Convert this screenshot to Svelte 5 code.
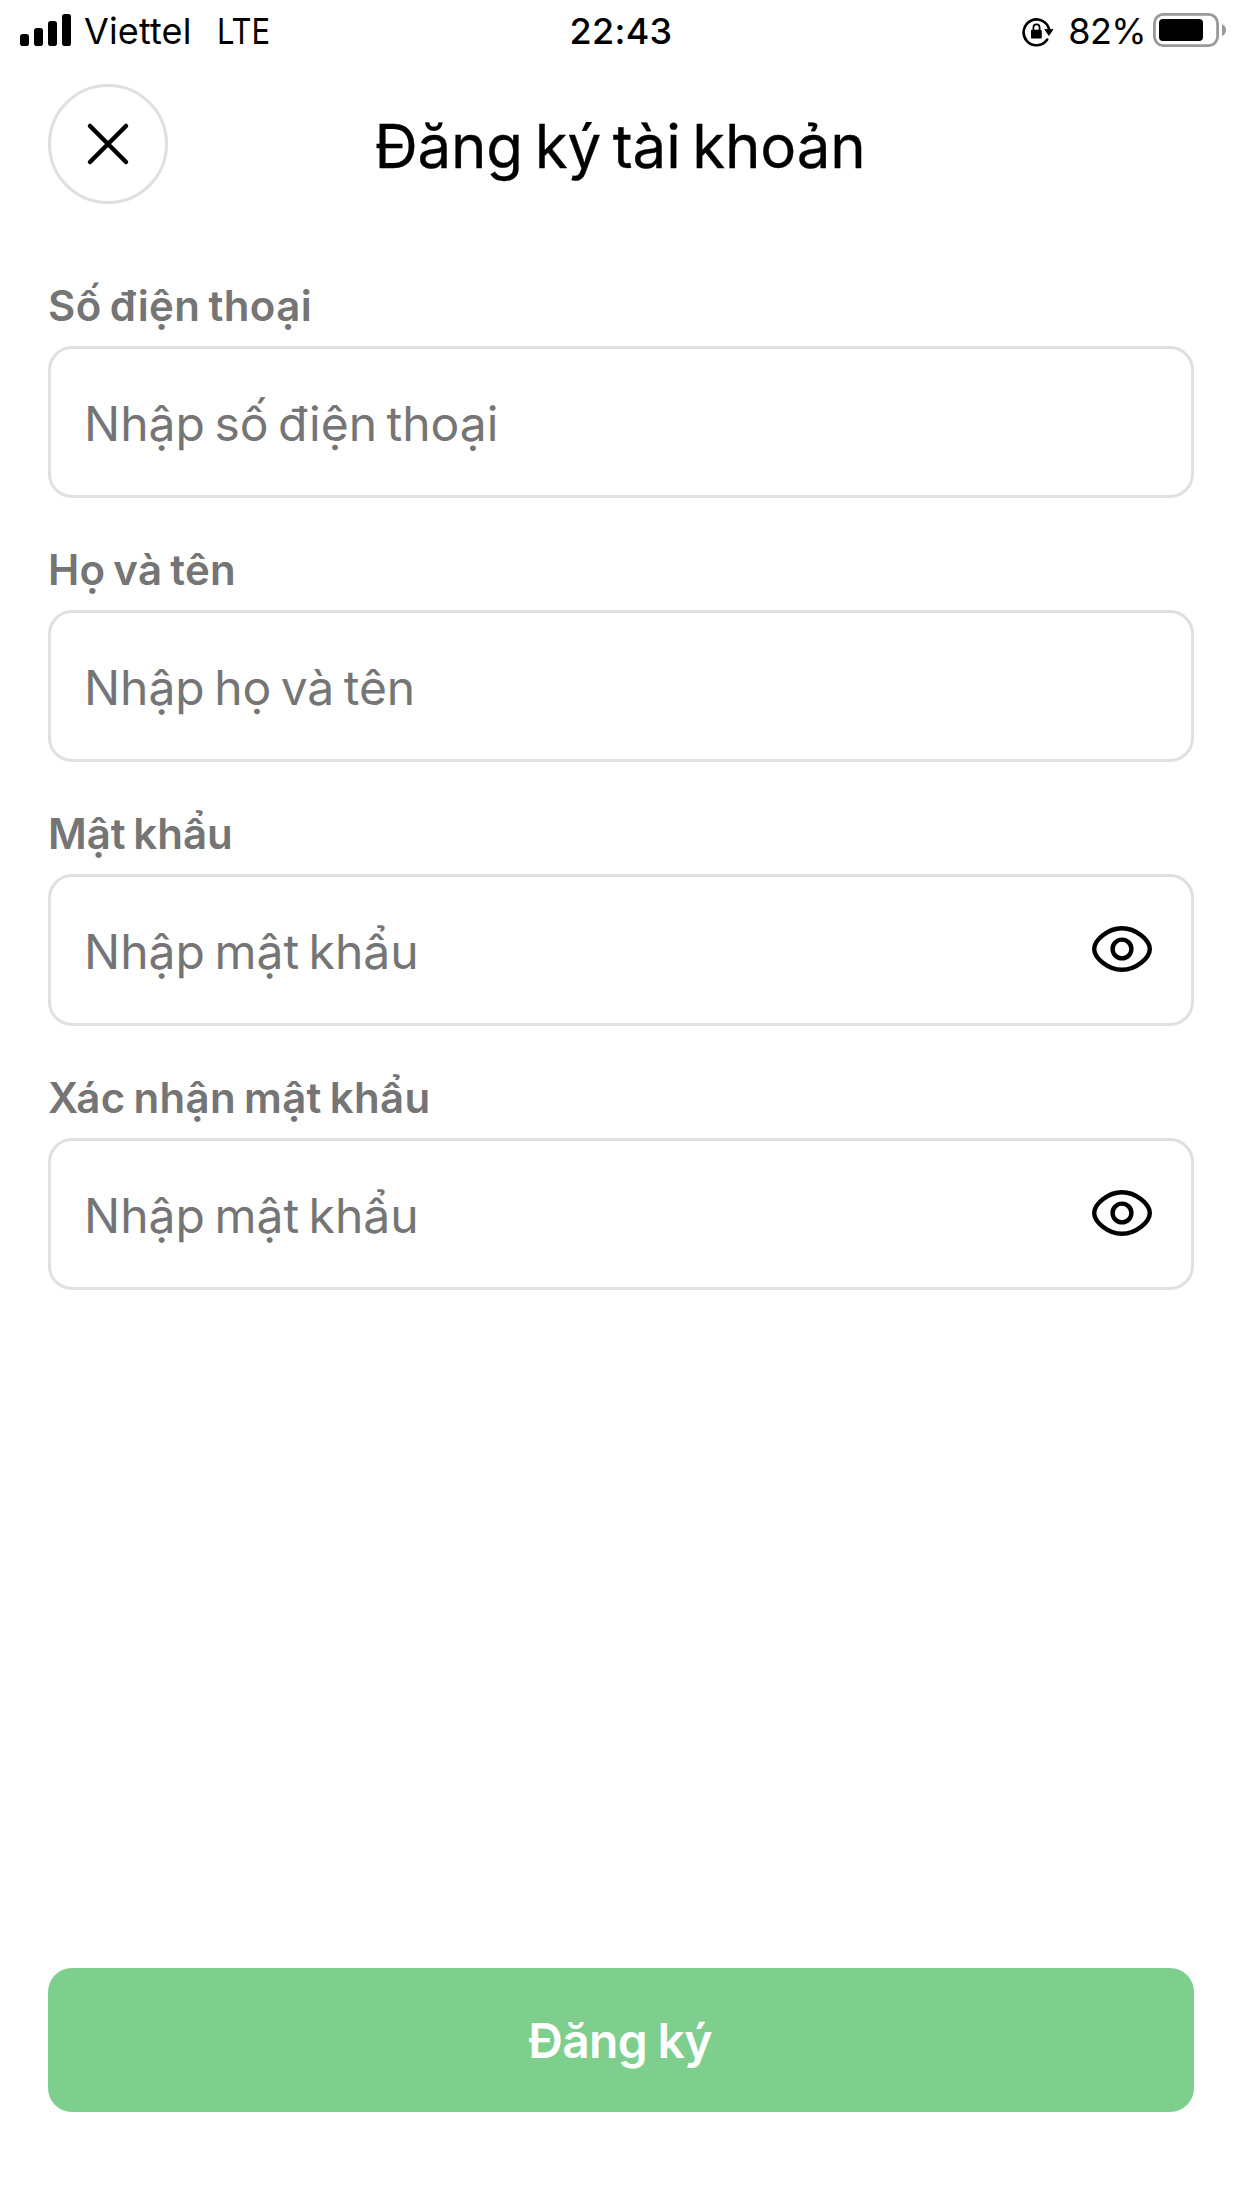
<script>
  const fields = [
    { id: 'phone', label: 'Số điện thoại', hint: 'Nhập số điện thoại', secret: false },
    { id: 'name', label: 'Họ và tên', hint: 'Nhập họ và tên', secret: false },
    { id: 'password', label: 'Mật khẩu', hint: 'Nhập mật khẩu', secret: true },
    { id: 'confirm', label: 'Xác nhận mật khẩu', hint: 'Nhập mật khẩu', secret: true }
  ];
</script>

<div class="screen">
  <div class="status">
    <div class="carrier">
      <svg class="signal" width="51" height="32" viewBox="0 0 51 32">
        <rect x="0" y="20" width="9" height="12" rx="2.8" />
        <rect x="14" y="14" width="9" height="18" rx="2.8" />
        <rect x="28" y="7" width="9" height="25" rx="2.8" />
        <rect x="42" y="0" width="9" height="32" rx="2.8" />
      </svg>
      <span class="operator">Viettel</span>
      <span class="network">LTE</span>
    </div>
    <div class="time">22:43</div>
    <div class="power">
      <svg class="lock" width="32" height="30" viewBox="0 0 32 30">
        <path d="M25.2 22.6A12.9 12.9 0 1 1 27.2 13" fill="none" stroke="#000" stroke-width="2.6" stroke-linecap="round" />
        <path d="M22.8 12.4h8.2l-4.1 6z" stroke="#000" stroke-width="0.8" stroke-linejoin="round" />
        <rect x="9" y="12.8" width="10.8" height="8.8" rx="1.2" />
        <path d="M11.4 13.5v-3a3.1 3.1 0 0 1 6.2 0v3" fill="none" stroke="#000" stroke-width="1.7" />
      </svg>
      <span class="percent">82%</span>
      <svg class="battery" width="74" height="34" viewBox="0 0 74 34">
        <rect x="1.4" y="1.4" width="63.2" height="31.2" rx="9" fill="none" stroke="#999" stroke-width="2.8" />
        <rect x="6" y="6" width="44" height="22" rx="4" />
        <path d="M69 11q4 2 4 6t-4 6z" fill="#999" />
      </svg>
    </div>
  </div>

  <header>
    <button class="close" aria-label="Đóng">
      <svg width="48" height="48" viewBox="0 0 48 48">
        <path d="M6 6l36 36M42 6L6 42" fill="none" stroke="#000" stroke-width="4.5" stroke-linecap="round" />
      </svg>
    </button>
    <h1>Đăng ký tài khoản</h1>
  </header>

  <main>
    {#each fields as field (field.id)}
      <section class="field {field.id}">
        <div class="label">{field.label}</div>
        <div class="box">
          <span class="hint">{field.hint}</span>
          {#if field.secret}
            <svg class="eye" width="60" height="48" viewBox="0 0 60 48">
              <path
                d="M30 3.2C44 3.2 57.8 15 57.8 24S44 44.8 30 44.8 2.2 33 2.2 24 16 3.2 30 3.2Z"
                fill="none" stroke="#000" stroke-width="4.4"
              />
              <circle cx="30" cy="24" r="9.4" fill="none" stroke="#000" stroke-width="4.4" />
            </svg>
          {/if}
        </div>
      </section>
    {/each}
  </main>

  <button class="submit">Đăng ký</button>
</div>

<style>
  :global(body) {
    background: #fff;
  }
  .screen {
    box-sizing: border-box;
    width: 1242px;
    height: 2208px;
    padding-bottom: 96px;
    display: flex;
    flex-direction: column;
    background: #fff;
    color: #000;
    font-family: Inter, Roboto, sans-serif;
  }
  .status {
    height: 62px;
    padding: 0 15px;
    display: grid;
    grid-template-columns: 1fr auto 1fr;
    font-size: 36px;
    line-height: 62px;
  }
  .carrier,
  .power {
    display: flex;
    align-items: flex-start;
  }
  .power {
    justify-content: flex-end;
  }
  .signal {
    margin: 14px 13px 0 5px;
  }
  .operator {
    letter-spacing: 0.15px;
  }
  .network {
    margin-left: 25px;
    transform: scaleX(0.86);
    transform-origin: left;
  }
  .time {
    font-weight: 550;
    letter-spacing: 0.3px;
  }
  .lock {
    margin: 17px 14px 0 0;
  }
  .percent {
    letter-spacing: -0.6px;
  }
  .battery {
    margin: 13px 0 0 7px;
  }
  header {
    height: 120px;
    margin-top: 22px;
    padding: 0 48px;
    display: grid;
    grid-template-columns: 120px 1fr 120px;
    align-items: center;
  }
  .close {
    box-sizing: border-box;
    width: 120px;
    height: 120px;
    padding: 0;
    display: flex;
    align-items: center;
    justify-content: center;
    border: 3px solid #e0e0e0;
    border-radius: 50%;
    background: #fff;
  }
  h1 {
    margin: 0;
    padding: 3px 2px 0 0;
    font-size: 60px;
    line-height: 72px;
    font-weight: 400;
    letter-spacing: -0.15px;
    word-spacing: -5px;
    text-align: center;
    white-space: nowrap;
    -webkit-text-stroke: 0.3px #000;
  }
  main {
    flex: 1;
    padding: 78px 48px 0;
    display: flex;
    flex-direction: column;
    gap: 48px;
  }
  .field {
    height: 216px;
    display: flex;
    flex-direction: column;
    justify-content: space-between;
  }
  .label {
    margin-top: -2px;
    font-size: 42px;
    line-height: 52px;
    font-weight: 600;
    letter-spacing: 0.4px;
    word-spacing: -3px;
    color: #757575;
  }
  .box {
    box-sizing: border-box;
    height: 152px;
    padding: 0 39px 0 33px;
    display: flex;
    align-items: center;
    justify-content: space-between;
    border: 3px solid #e0e0e0;
    border-radius: 24px;
  }
  .hint {
    padding-top: 3px;
    font-size: 48px;
    line-height: 60px;
    letter-spacing: 0;
    word-spacing: -4px;
    color: #757575;
  }
  .name .label {
    letter-spacing: 0.3px;
  }
  .password .label {
    letter-spacing: 0;
  }
  .confirm .label {
    letter-spacing: 0.35px;
  }
  .name .hint {
    letter-spacing: -0.05px;
  }
  .password .hint,
  .confirm .hint {
    letter-spacing: 0;
  }
  .eye {
    margin-top: -2px;
  }
  .submit {
    height: 144px;
    margin: 0 48px;
    padding: 2px 2px 0 0;
    border: 0;
    border-radius: 24px;
    background: #7ece8d;
    color: #fff;
    font: 600 48px/60px Inter, Roboto, sans-serif;
    letter-spacing: -0.7px;
    word-spacing: -1px;
  }
</style>
